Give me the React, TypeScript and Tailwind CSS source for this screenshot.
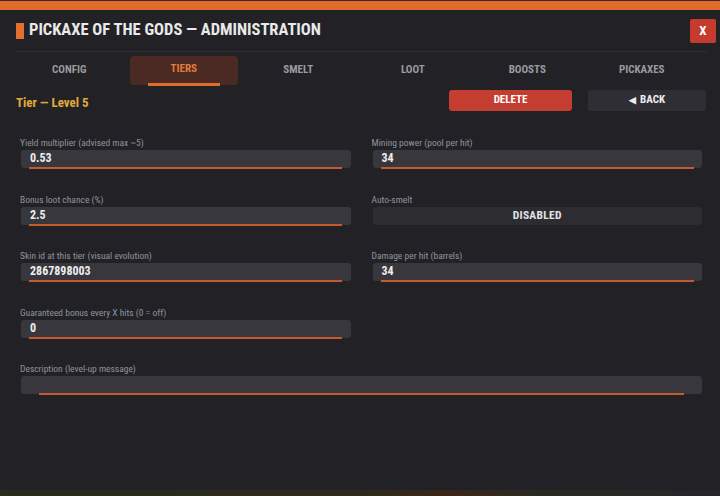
const FONT = "font-['Roboto_Condensed','Roboto',sans-serif] [font-stretch:condensed]"

const tabs = ['CONFIG', 'TIERS', 'SMELT', 'LOOT', 'BOOSTS', 'PICKAXES']

type Field = {
  label: string
  value?: string
  toggle?: string
  wide?: boolean
}

const fields: Field[] = [
  { label: 'Yield multiplier (advised max ~5)', value: '0.53' },
  { label: 'Mining power (pool per hit)', value: '34' },
  { label: 'Bonus loot chance (%)', value: '2.5' },
  { label: 'Auto-smelt', toggle: 'DISABLED' },
  { label: 'Skin id at this tier (visual evolution)', value: '2867898003' },
  { label: 'Damage per hit (barrels)', value: '34' },
  { label: 'Guaranteed bonus every X hits (0 = off)', value: '0' },
  { label: '' },
  { label: 'Description (level-up message)', value: '', wide: true },
]

function FieldBox({ field }: { field: Field }) {
  if (!field.label) return <div />
  return (
    <div className={field.wide ? 'col-span-2 flex flex-col' : 'flex flex-col'}>
      <div className="h-[14px] -ml-px text-[9.5px] leading-[14px] text-[#8d949d]">{field.label}</div>
      {field.toggle ? (
        <div className="h-[18px] rounded-[3px] bg-[#2c2c31] flex items-center justify-center text-[11.5px] font-bold text-[#e4e4e4] tracking-wide">
          {field.toggle}
        </div>
      ) : (
        <div className="h-[18px] rounded-[3px] bg-[#37373d] flex flex-col">
          <div className="h-[16px] leading-[16px] px-[9px] text-[12px] font-bold text-[#ededed] overflow-hidden">
            {field.value}
          </div>
          <div
            className={
              field.wide
                ? 'h-[2px] w-[94.6%] self-center translate-y-px bg-[#c65a2b]'
                : 'h-[2px] w-[95%] self-center translate-y-px bg-[#c65a2b]'
            }
          />
        </div>
      )}
    </div>
  )
}

export default function App() {
  return (
    <div className={`w-[720px] h-[496px] bg-[#222226] flex flex-col overflow-hidden ${FONT}`}>
      <div className="h-[10px] bg-[#e06b2c] border-t border-[#3a2a20]" />

      <div className="h-[41px] flex items-center pl-4 pr-[4px]">
        <div className="w-2 h-4 bg-[#e2702e] mr-[5px]" />
        <h1 className="flex-1 text-[16.5px] font-bold text-[#e9e9e9]">
          PICKAXE OF THE GODS — ADMINISTRATION
        </h1>
        <button className="w-[26px] h-[24px] rounded-[2px] bg-[#c53c2e] text-white text-[13px] font-bold flex items-center justify-center">
          X
        </button>
      </div>

      <div className="mx-4 mr-[13px] h-px bg-[#2d2d32]" />

      <div className="ml-[15px] w-[681px] mt-[4px] grid grid-cols-6 gap-[6px] h-[29px]">
        {tabs.map((tab) => (
          <div
            key={tab}
            className={
              tab === 'TIERS'
                ? 'rounded-[4px] bg-[#4b2a23] flex flex-col items-center'
                : 'flex flex-col items-center'
            }
          >
            <div
              className={
                tab === 'TIERS'
                  ? 'flex-1 flex items-center text-[11px] font-bold text-[#e47a3a]'
                  : 'flex-1 flex items-center text-[11px] font-bold text-[#9a9aa0]'
              }
            >
              {tab}
            </div>
            {tab === 'TIERS' && <div className="w-[72px] h-[3px] bg-[#e06b2c] translate-y-px" />}
          </div>
        ))}
      </div>

      <div className="mt-[5px] h-[21px] flex items-center pl-4 pr-[14px]">
        <div className="flex-1 text-[13px] font-bold text-[#e3a93c] translate-y-[2px]">Tier — Level 5</div>
        <button className="w-[123px] h-[21px] rounded-[3px] bg-[#c33d30] text-white text-[11px] font-bold">
          DELETE
        </button>
        <button className="ml-4 w-[118px] h-[21px] rounded-[3px] bg-[#2e2e34] text-[#eeeeee] text-[11px] font-bold flex items-center justify-center gap-[4px]">
          <span className="text-[9px]">◀</span>
          BACK
        </button>
      </div>

      <div className="mt-[25px] ml-[21px] w-[681px] grid grid-cols-2 gap-x-[22px] gap-y-[24.5px]">
        {fields.map((f, idx) => (
          <FieldBox key={idx} field={f} />
        ))}
      </div>

      <div className="flex-1" />
      <div className="h-[6px] bg-[linear-gradient(90deg,#2a2b1d_0%,#2c2a1c_50%,#3b2519_62%,#2a2a22_75%,#25262a_100%)]" />
    </div>
  )
}
